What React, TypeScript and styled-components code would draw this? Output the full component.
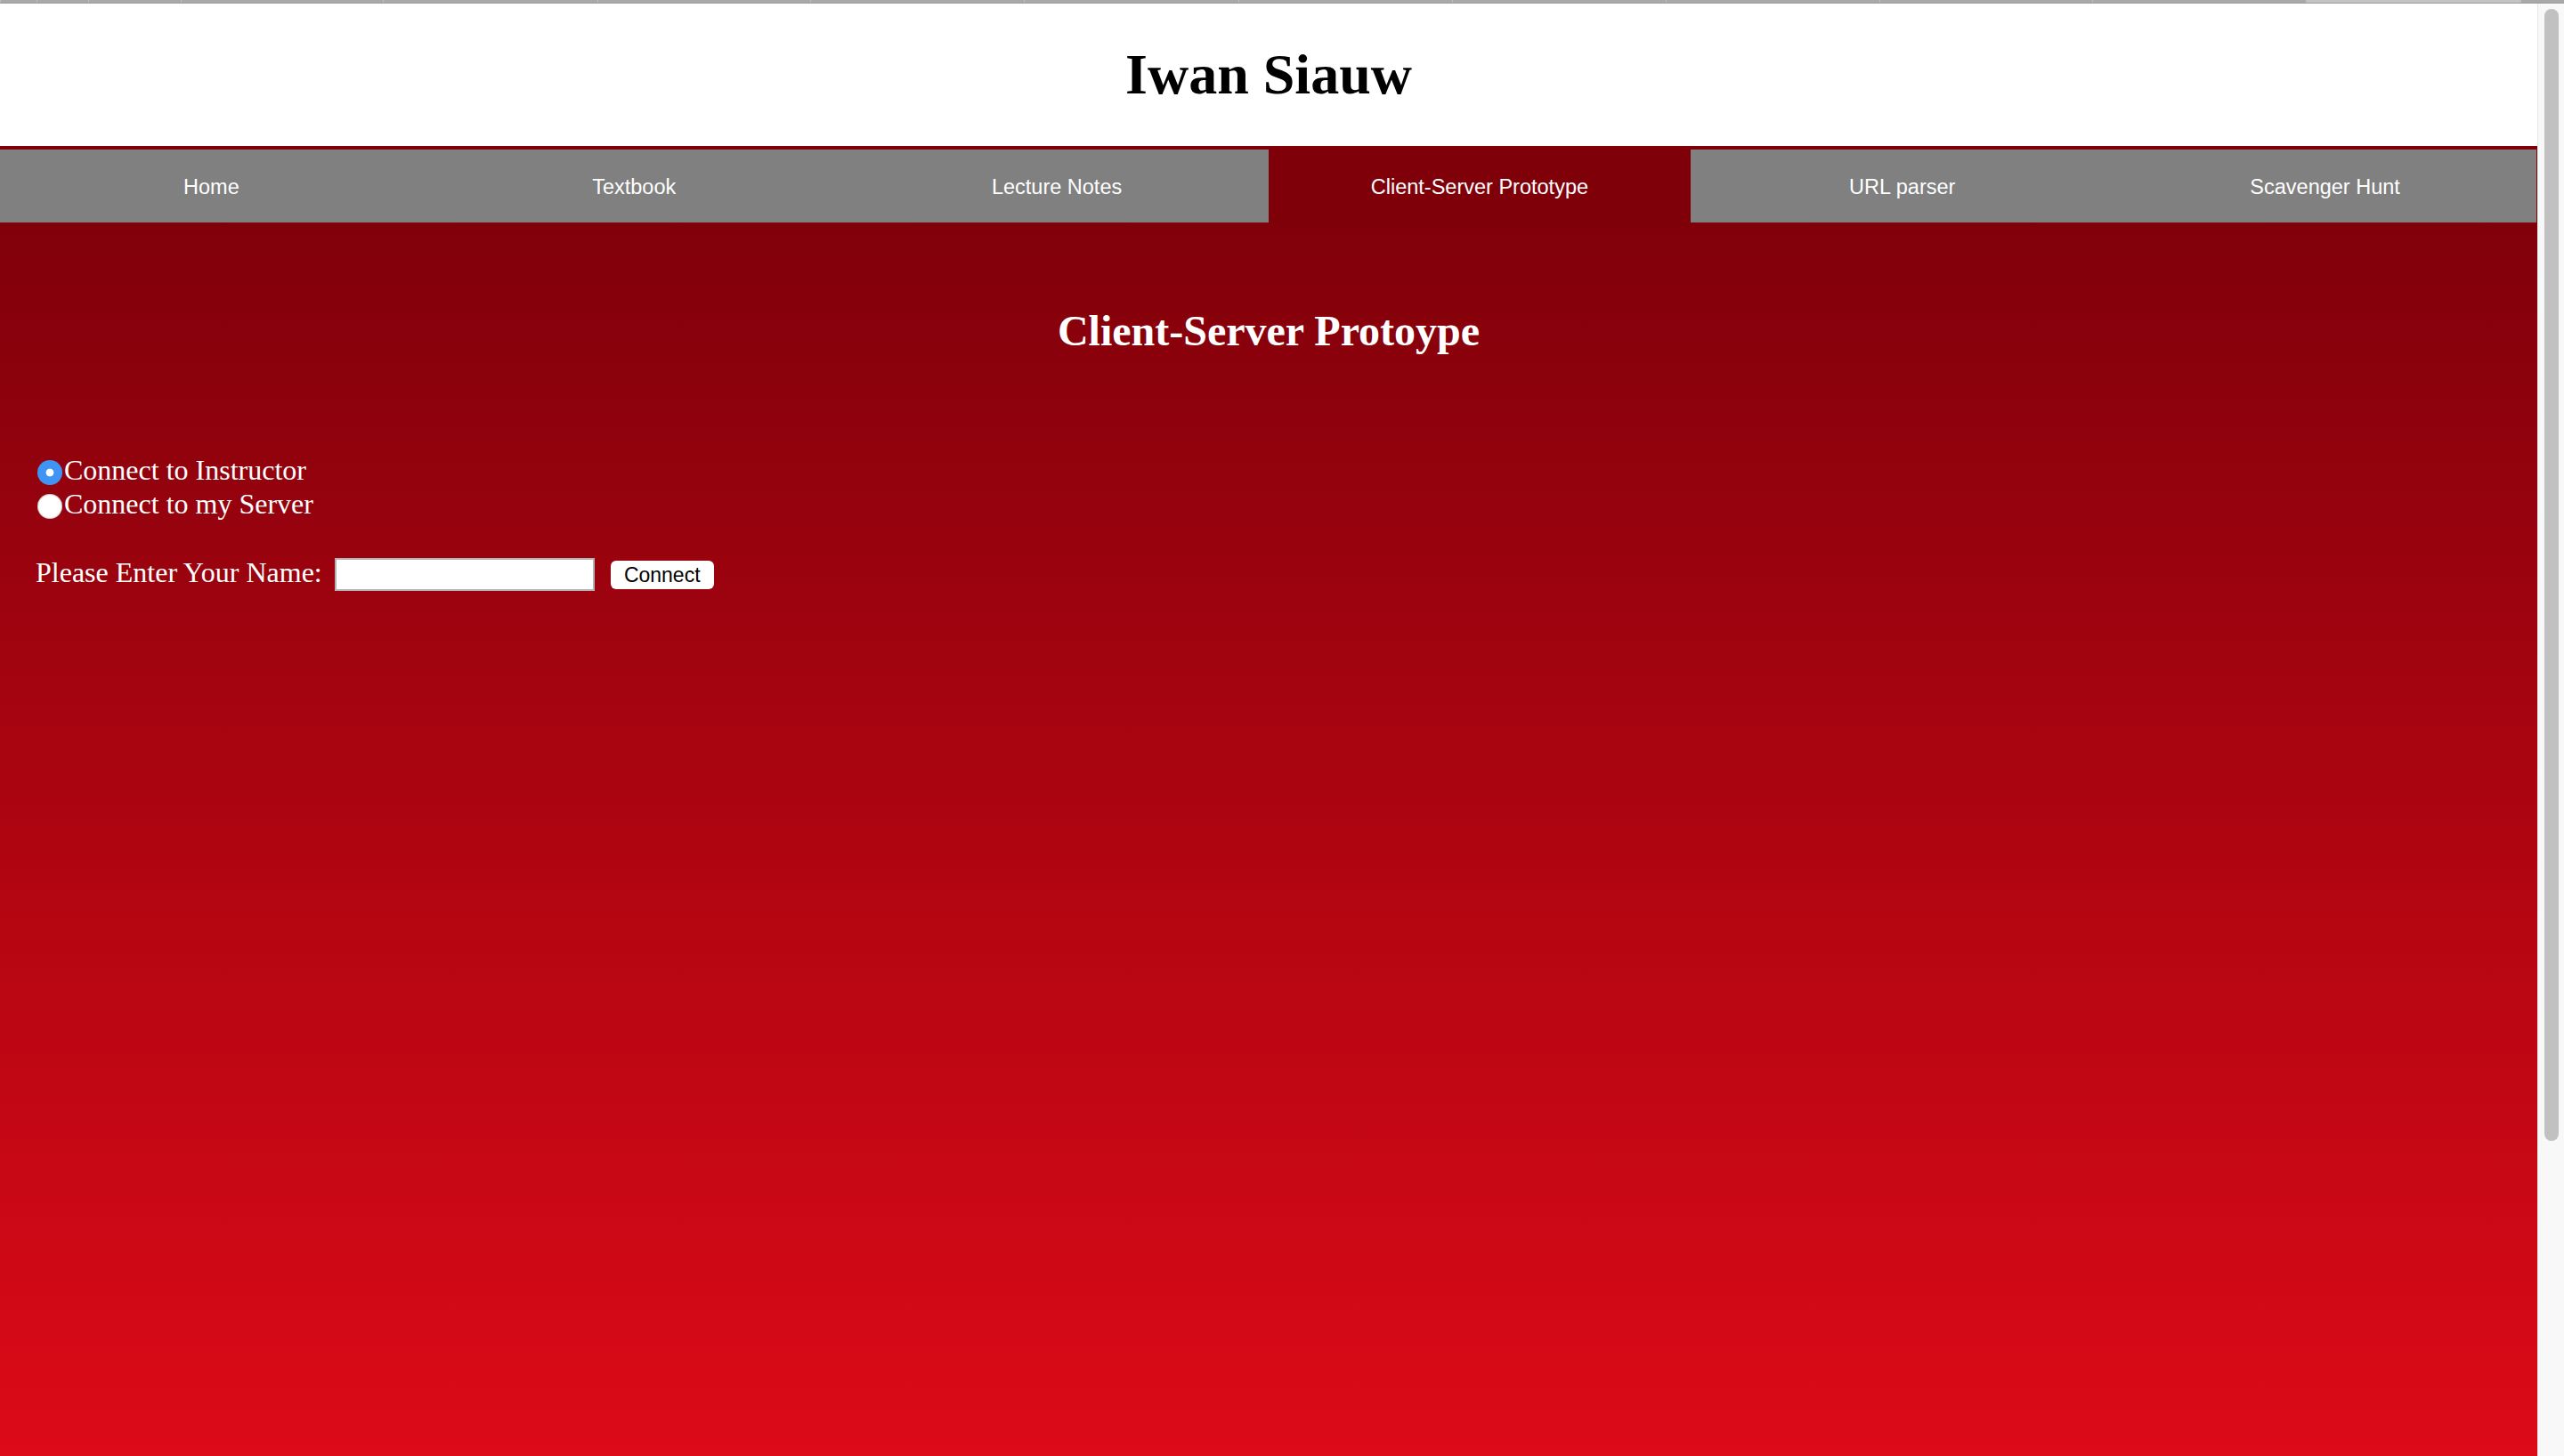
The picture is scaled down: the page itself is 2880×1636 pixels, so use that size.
import React, { useState } from "react";
import styled, { createGlobalStyle } from "styled-components";

const GlobalStyle = createGlobalStyle`
  html, body {
    margin: 0;
    padding: 0;
    height: 100%;
    overflow: hidden;
    background: #ffffff;
  }
  #root {
    height: 100%;
  }
`;

const SERIF = `"Liberation Serif", "Times New Roman", Times, serif`;
const SANS = `"Liberation Sans", Arial, Helvetica, sans-serif`;

const Window = styled.div`
  display: flex;
  flex-direction: column;
  width: 2880px;
  height: 1636px;
  overflow: hidden;
`;

const TabStrip = styled.div`
  display: flex;
  height: 3px;
  background: #a9a9a9;
  border-bottom: 1px solid #999999;
  flex: none;
`;

const Tab = styled.div<{ $w: number; $active?: boolean }>`
  flex: none;
  width: ${(p) => p.$w}px;
  height: 100%;
  box-sizing: border-box;
  border-left: 1px solid #bdbdbd;
  background: ${(p) => (p.$active ? "#c4c4c4" : "transparent")};
`;

const Body = styled.div`
  display: flex;
  flex: 1;
  min-height: 0;
`;

const Page = styled.div`
  display: flex;
  flex-direction: column;
  width: 2850px;
  flex: none;
`;

const Header = styled.header`
  height: 160px;
  background: #ffffff;
  display: flex;
  justify-content: center;
  align-items: flex-start;
  flex: none;
`;

const SiteTitle = styled.h1`
  margin: 43px 0 0;
  font-family: ${SERIF};
  font-weight: bold;
  font-size: 64px;
  line-height: 74px;
  color: #000000;
`;

const Nav = styled.nav`
  display: grid;
  grid-template-columns: repeat(6, 1fr);
  background: #80000a;
  padding: 4px 1px 0 0;
  flex: none;
`;

const NavItem = styled.a<{ $active?: boolean }>`
  display: flex;
  align-items: center;
  justify-content: center;
  box-sizing: border-box;
  height: 82px;
  padding-top: 3px;
  background: ${(p) => (p.$active ? "#80000a" : "#808080")};
  color: #ffffff;
  font-family: ${SANS};
  font-size: 23.5px;
  text-decoration: none;
  cursor: pointer;
`;

const Content = styled.main`
  flex: 1;
  display: flex;
  flex-direction: column;
  background: linear-gradient(to bottom, #80000a 0%, #dd0a18 100%);
  color: #ffffff;
  font-family: ${SERIF};
`;

const PageTitle = styled.h2`
  margin: 94px 0 0;
  text-align: center;
  font-family: ${SERIF};
  font-weight: bold;
  font-size: 48px;
  line-height: 55px;
  color: #ffffff;
`;

const RadioGroup = styled.div`
  display: flex;
  flex-direction: column;
  margin-top: 110px;
  padding-left: 42px;
`;

const RadioRow = styled.label`
  display: flex;
  align-items: flex-start;
  font-size: 32px;
  line-height: 38px;
  cursor: pointer;
`;

const Radio = styled.input`
  appearance: none;
  -webkit-appearance: none;
  width: 28px;
  height: 28px;
  margin: 8px 2px 0 0;
  border-radius: 50%;
  flex: none;
  background: #ffffff;
  box-shadow: inset 0 0 1px 1px rgba(0, 0, 0, 0.22);
  &:checked {
    background: radial-gradient(circle, #ffffff 0 4px, #3f94f4 4.8px);
    box-shadow: none;
  }
  &:focus {
    outline: none;
  }
`;

const NameRow = styled.div`
  display: flex;
  align-items: flex-start;
  margin-top: 39px;
  padding-left: 40px;
`;

const NameLabel = styled.span`
  font-size: 32px;
  line-height: 38px;
  margin-right: 14px;
  white-space: nowrap;
`;

const NameInput = styled.input`
  box-sizing: border-box;
  width: 292px;
  height: 37px;
  margin: 3px 18px 0 0;
  padding: 2px 6px;
  border: 2px solid #b3b3b3;
  background: #ffffff;
  font-family: ${SANS};
  font-size: 24px;
  &:focus {
    outline: none;
  }
`;

const ConnectButton = styled.button`
  box-sizing: border-box;
  width: 116px;
  height: 32px;
  margin-top: 6px;
  padding: 0;
  border: none;
  border-radius: 6px;
  background: #ffffff;
  color: #000000;
  font-family: ${SANS};
  font-size: 23px;
  line-height: 32px;
  cursor: pointer;
`;

const Scrollbar = styled.div`
  width: 30px;
  flex: none;
  box-sizing: border-box;
  background: #f8f8f8;
  border-left: 1px solid #e6e6e6;
  padding: 6px 6px 0 7px;
`;

const Thumb = styled.div`
  height: 1272px;
  border-radius: 8px;
  background: #c1c1c1;
`;

const tabWidths = [41, 58, 104, 227, 241, 239, 240, 241, 240, 240, 240, 239, 240, 241, 49];

const navItems = [
  "Home",
  "Textbook",
  "Lecture Notes",
  "Client-Server Prototype",
  "URL parser",
  "Scavenger Hunt",
];

export default function App() {
  const [target, setTarget] = useState("instructor");
  const [name, setName] = useState("");

  return (
    <>
      <GlobalStyle />
      <Window>
        <TabStrip>
          {tabWidths.map((w, i) => (
            <Tab key={i} $w={w} $active={i === 13} />
          ))}
        </TabStrip>
        <Body>
          <Page>
            <Header>
              <SiteTitle>Iwan Siauw</SiteTitle>
            </Header>
            <Nav>
              {navItems.map((item) => (
                <NavItem key={item} $active={item === "Client-Server Prototype"}>
                  {item}
                </NavItem>
              ))}
            </Nav>
            <Content>
              <PageTitle>Client-Server Protoype</PageTitle>
              <RadioGroup>
                <RadioRow>
                  <Radio
                    type="radio"
                    name="server"
                    checked={target === "instructor"}
                    onChange={() => setTarget("instructor")}
                  />
                  Connect to Instructor
                </RadioRow>
                <RadioRow>
                  <Radio
                    type="radio"
                    name="server"
                    checked={target === "mine"}
                    onChange={() => setTarget("mine")}
                  />
                  Connect to my Server
                </RadioRow>
              </RadioGroup>
              <NameRow>
                <NameLabel>Please Enter Your Name:</NameLabel>
                <NameInput
                  type="text"
                  value={name}
                  onChange={(e) => setName(e.target.value)}
                />
                <ConnectButton type="button">Connect</ConnectButton>
              </NameRow>
            </Content>
          </Page>
          <Scrollbar>
            <Thumb />
          </Scrollbar>
        </Body>
      </Window>
    </>
  );
}
